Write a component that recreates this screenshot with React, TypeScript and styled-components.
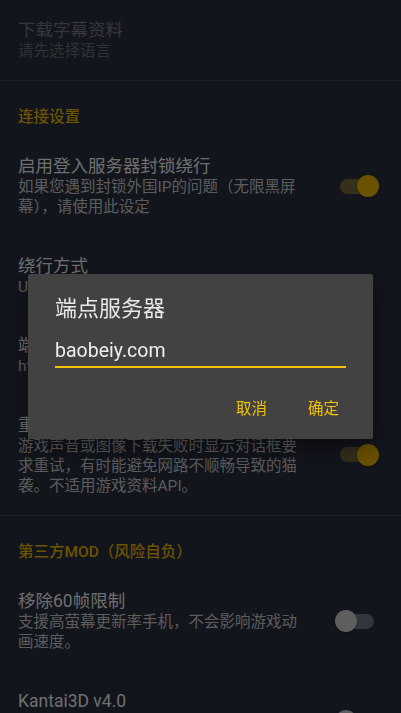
import React from "react";
import styled, { createGlobalStyle } from "styled-components";

type Pref = {
  title: string;
  summary?: string;
  toggle?: boolean;
  disabled?: boolean;
};

type Section = {
  header?: string;
  items: Pref[];
};

const sections: Section[] = [
  {
    items: [{ title: "下载字幕资料", summary: "请先选择语言", disabled: true }],
  },
  {
    header: "连接设置",
    items: [
      {
        title: "启用登入服务器封锁绕行",
        summary: "如果您遇到封锁外国IP的问题（无限黑屏幕），请使用此设定",
        toggle: true,
      },
      { title: "绕行方式", summary: "URL替换" },
      { title: "端点服务器", summary: "https://baobeiy.com" },
      {
        title: "重试下载对话框",
        summary:
          "游戏声音或图像下载失败时显示对话框要求重试，有时能避免网路不顺畅导致的猫袭。不适用游戏资料API。",
        toggle: true,
      },
    ],
  },
  {
    header: "第三方MOD（风险自负）",
    items: [
      {
        title: "移除60帧限制",
        summary: "支援高萤幕更新率手机，不会影响游戏动画速度。",
        toggle: false,
      },
      {
        title: "Kantai3D v4.0",
        summary: "为舰娘立绘加上3D视差效果，需要较多记忆体，部分机型可能无法使用。",
        toggle: false,
      },
    ],
  },
];

const App = () => {
  return (
    <>
      <GlobalStyle />
      <Screen>
        {sections.map((section, i) => (
          <SectionBlock key={i} $last={i === sections.length - 1}>
            {section.header && <SectionHeader>{section.header}</SectionHeader>}
            {section.items.map((item) => (
              <Row key={item.title}>
                <TextCol>
                  <Title $disabled={item.disabled}>{item.title}</Title>
                  {item.summary && (
                    <Summary $disabled={item.disabled}>{item.summary}</Summary>
                  )}
                </TextCol>
                {item.toggle !== undefined && (
                  <Switch $on={item.toggle}>
                    <Track $on={item.toggle} />
                    <Knob $on={item.toggle} />
                  </Switch>
                )}
              </Row>
            ))}
          </SectionBlock>
        ))}
      </Screen>

      <Scrim>
        <Dialog>
          <DialogTitle>端点服务器</DialogTitle>
          <Field>baobeiy.com</Field>
          <Actions>
            <TextButton>取消</TextButton>
            <TextButton>确定</TextButton>
          </Actions>
        </Dialog>
      </Scrim>
    </>
  );
};

export default App;

const GlobalStyle = createGlobalStyle`
  html, body {
    margin: 0;
    padding: 0;
    height: 100%;
    overflow: hidden;
    background: #262a3a;
  }
  body {
    font-family: Roboto, "Noto Sans CJK SC", sans-serif;
  }
  * {
    box-sizing: border-box;
  }
`;

const Screen = styled.div`
  height: 100vh;
  overflow: hidden;
  background: #262a3a;
`;

const SectionBlock = styled.div<{ $last?: boolean }>`
  border-bottom: ${(p) => (p.$last ? "none" : "1px solid #3a3e4f")};
`;

const SectionHeader = styled.div`
  padding: 26px 18px 10px;
  font-size: 15.5px;
  line-height: 20px;
  font-weight: 500;
  color: #d6a600;
`;

const Row = styled.div`
  display: flex;
  align-items: center;
  padding: 18.75px 22px 18.75px 18px;
  gap: 32px;
`;

const TextCol = styled.div`
  flex: 1;
  min-width: 0;
`;

const Title = styled.div<{ $disabled?: boolean }>`
  font-size: 17.5px;
  line-height: 22px;
  color: ${(p) => (p.$disabled ? "#6a6e7c" : "#dedede")};
`;

const Summary = styled.div<{ $disabled?: boolean }>`
  font-size: 15.5px;
  line-height: 20px;
  color: ${(p) => (p.$disabled ? "#60646f" : "#b8b8b8")};
`;

const Switch = styled.div<{ $on: boolean }>`
  position: relative;
  flex: none;
  width: 44px;
  height: 22px;
`;

const Track = styled.div<{ $on: boolean }>`
  position: absolute;
  left: 5px;
  right: 5px;
  top: 3.5px;
  height: 15px;
  border-radius: 8px;
  background: ${(p) => (p.$on ? "#6a5f36" : "#686c7a")};
`;

const Knob = styled.div<{ $on: boolean }>`
  position: absolute;
  top: 0;
  left: ${(p) => (p.$on ? "22px" : "0")};
  width: 22px;
  height: 22px;
  border-radius: 50%;
  background: ${(p) => (p.$on ? "#d6a400" : "#bdbdbd")};
  box-shadow: 0 1px 2px rgba(0, 0, 0, 0.3);
`;

const Scrim = styled.div`
  position: fixed;
  inset: 0;
  background: rgba(0, 0, 0, 0.5);
  display: flex;
  align-items: center;
  justify-content: center;
`;

const Dialog = styled.div`
  width: 345px;
  background: #424242;
  border-radius: 2px;
  padding: 22px 0 12px;
  box-shadow: 0 10px 24px rgba(0, 0, 0, 0.4);
`;

const DialogTitle = styled.div`
  padding: 0 27px;
  font-size: 22px;
  line-height: 26px;
  color: #e8e8e8;
`;

const Field = styled.div`
  margin: 17px 27px 0;
  padding-bottom: 3px;
  font-size: 19.5px;
  line-height: 24px;
  color: #eeeeee;
  border-bottom: 2px solid #f5c000;
`;

const Actions = styled.div`
  display: flex;
  justify-content: flex-end;
  gap: 21px;
  padding: 23px 24px 0;
`;

const TextButton = styled.div`
  padding: 8px 10px;
  font-size: 15.5px;
  line-height: 20px;
  color: #f2c200;
`;
